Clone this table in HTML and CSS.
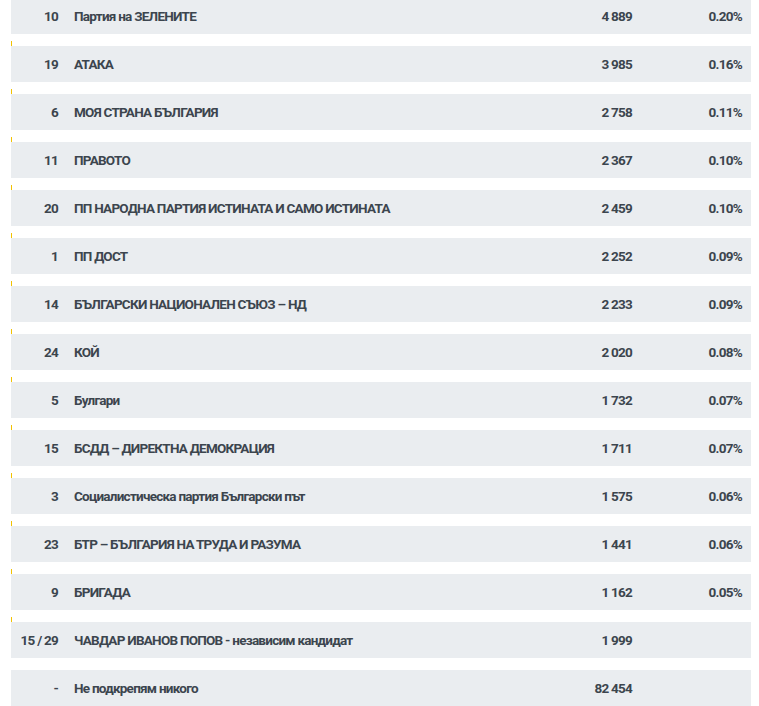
FILE: index.html
```html
<!DOCTYPE html>
<html lang="bg">
<head>
<meta charset="utf-8">
<title>Резултати</title>
<link rel="stylesheet" href="styles.css">
</head>
<body>
<ul class="results">
  <li class="item"><div class="bar" style="width:0.20%"></div><div class="row"><span class="num">10</span><span class="name">Партия на ЗЕЛЕНИТЕ</span><span class="votes">4 889</span><span class="pct">0.20%</span></div></li>
  <li class="item"><div class="bar" style="width:0.16%"></div><div class="row"><span class="num">19</span><span class="name">АТАКА</span><span class="votes">3 985</span><span class="pct">0.16%</span></div></li>
  <li class="item"><div class="bar" style="width:0.11%"></div><div class="row"><span class="num">6</span><span class="name">МОЯ СТРАНА БЪЛГАРИЯ</span><span class="votes">2 758</span><span class="pct">0.11%</span></div></li>
  <li class="item"><div class="bar" style="width:0.10%"></div><div class="row"><span class="num">11</span><span class="name">ПРАВОТО</span><span class="votes">2 367</span><span class="pct">0.10%</span></div></li>
  <li class="item"><div class="bar" style="width:0.10%"></div><div class="row"><span class="num">20</span><span class="name">ПП НАРОДНА ПАРТИЯ ИСТИНАТА И САМО ИСТИНАТА</span><span class="votes">2 459</span><span class="pct">0.10%</span></div></li>
  <li class="item"><div class="bar" style="width:0.09%"></div><div class="row"><span class="num">1</span><span class="name">ПП ДОСТ</span><span class="votes">2 252</span><span class="pct">0.09%</span></div></li>
  <li class="item"><div class="bar" style="width:0.09%"></div><div class="row"><span class="num">14</span><span class="name">БЪЛГАРСКИ НАЦИОНАЛЕН СЪЮЗ – НД</span><span class="votes">2 233</span><span class="pct">0.09%</span></div></li>
  <li class="item"><div class="bar" style="width:0.08%"></div><div class="row"><span class="num">24</span><span class="name">КОЙ</span><span class="votes">2 020</span><span class="pct">0.08%</span></div></li>
  <li class="item"><div class="bar" style="width:0.07%"></div><div class="row"><span class="num">5</span><span class="name">Булгари</span><span class="votes">1 732</span><span class="pct">0.07%</span></div></li>
  <li class="item"><div class="bar" style="width:0.07%"></div><div class="row"><span class="num">15</span><span class="name">БСДД – ДИРЕКТНА ДЕМОКРАЦИЯ</span><span class="votes">1 711</span><span class="pct">0.07%</span></div></li>
  <li class="item"><div class="bar" style="width:0.06%"></div><div class="row"><span class="num">3</span><span class="name">Социалистическа партия Български път</span><span class="votes">1 575</span><span class="pct">0.06%</span></div></li>
  <li class="item"><div class="bar" style="width:0.06%"></div><div class="row"><span class="num">23</span><span class="name">БТР – БЪЛГАРИЯ НА ТРУДА И РАЗУМА</span><span class="votes">1 441</span><span class="pct">0.06%</span></div></li>
  <li class="item"><div class="bar" style="width:0.05%"></div><div class="row"><span class="num">9</span><span class="name">БРИГАДА</span><span class="votes">1 162</span><span class="pct">0.05%</span></div></li>
  <li class="item"><div class="bar" style="width:0.08%"></div><div class="row"><span class="num">15 / 29</span><span class="name">ЧАВДАР ИВАНОВ ПОПОВ - независим кандидат</span><span class="votes">1 999</span><span class="pct"></span></div></li>
  <li class="item"><div class="bar" style="width:0%"></div><div class="row"><span class="num">-</span><span class="name">Не подкрепям никого</span><span class="votes">82 454</span><span class="pct"></span></div></li>
</ul>
</body>
</html>
```
FILE: styles.css
```css
html, body {
  margin: 0;
  padding: 0;
  background: #ffffff;
}
body {
  font-family: Roboto, "Liberation Sans", sans-serif;
  color: #3c454e;
  overflow: hidden;
}
.results {
  list-style: none;
  margin: -7px 8px 0 11px;
  padding: 0;
  display: flex;
  flex-direction: column;
  gap: 7px;
}
.item {
  display: flex;
  flex-direction: column;
}
.bar {
  height: 5px;
  min-width: 0;
  background: #f2c200;
}
.row {
  height: 36px;
  background: #eaedf0;
  display: grid;
  grid-template-columns: 47px 1fr 110px 110px;
  column-gap: 16px;
  align-items: center;
  font-size: 13.5px;
  font-weight: 700;
  letter-spacing: -0.75px;
  padding-right: 9px;
}
.row > span {
  white-space: nowrap;
}
.num, .votes, .pct {
  text-align: right;
}
.votes {
  margin-right: -16px;
}
```
